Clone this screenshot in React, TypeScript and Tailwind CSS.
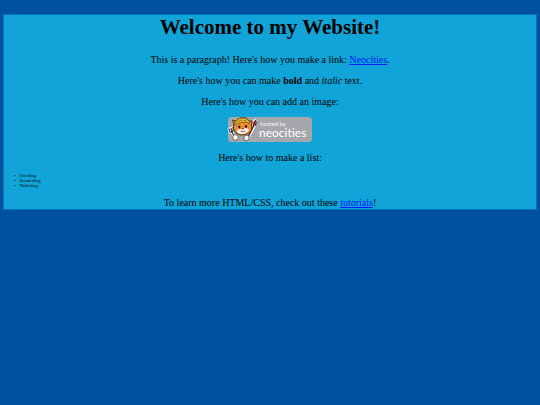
const things = ['First thing', 'Second thing', 'Third thing'];

function NeocitiesBadge() {
  return (
    <svg width="86" height="26" viewBox="0 0 86 26" role="img" aria-label="hosted by neocities">
      <rect x="1" y="0" width="84" height="25" rx="3.5" fill="#a5a7aa" />
      {/* fork */}
      <path d="M2 12Q2.5 16 5 15Q7 14 6 10.5M4 11.5 5 15 8 21" fill="none" stroke="#fff" strokeWidth="2.8" strokeLinecap="round" />
      <path d="M2 12Q2.5 16 5 15Q7 14 6 10.5M4 11.5 5 15 8 21" fill="none" stroke="#34495c" strokeWidth="1.3" strokeLinecap="round" />
      {/* brush */}
      <path d="M28 4 27 9M27 9 21 20" stroke="#fff" strokeWidth="3.4" strokeLinecap="round" />
      <path d="M27 8 21 20" stroke="#3b2a2a" strokeWidth="1.5" />
      <path d="M26.3 8Q25.8 5 28.7 3Q30.2 6 28.5 8.5Z" fill="#a82732" stroke="#34212a" strokeWidth=".6" />
      {/* cat */}
      <path d="M7 7 5.5 3 9 4.2Q13-1 20 1.5L22 4 25 4 24.5 8Q25.5 14 21.5 16.5Q14 20 8.5 15.5Q5 11.5 7 7Z" fill="#ed8b31" stroke="#5b3518" strokeWidth="1" />
      <path d="M7 8Q9 1 15.5 1Q21.5 1 23 6.5Q19 4.5 14.5 5.5Q10 6 7 8Z" fill="#e5bc3c" stroke="#805b13" strokeWidth=".9" />
      <path d="M10 4.5Q15 2 20 4" fill="none" stroke="#aa7b19" strokeWidth=".9" />
      <path d="M9.5 14Q12 11 15.5 12.5Q19 10 22 12.5Q20 16.5 15.5 17Q11 17 9.5 14Z" fill="#fff" />
      <ellipse cx="12.3" cy="10" rx="1.1" ry="1.4" fill="#24191a" />
      <ellipse cx="19" cy="9.5" rx="1.1" ry="1.4" fill="#24191a" />
      <path d="m14.8 11.5 2.4-.2-1.1 1.4Z" fill="#5a201c" />
      <path d="M13.5 14.2Q16 15.7 18.5 13.8" fill="none" stroke="#5a201c" strokeWidth=".8" />
      <circle cx="8.5" cy="20.5" r="2.8" fill="#fff" stroke="#4c4240" strokeWidth=".8" />
      <circle cx="19.5" cy="21" r="2.7" fill="#fff" stroke="#4c4240" strokeWidth=".8" />
      <text x="33" y="9" fontSize="6" fill="#f3f5f5" fontFamily="Lato, sans-serif">hosted by</text>
      <text x="32" y="20" fontSize="12" fill="#fff" fontFamily="Lato, sans-serif">neocities</text>
    </svg>
  );
}

export default function App() {
  return (
    <div className="min-h-screen bg-[#00529f] px-[3px] pt-3.5 font-['Liberation_Serif',serif] text-black">
      <main className="flex flex-col border border-[#0873b4] bg-[#10a4d8] text-center text-[10px] leading-3">
        <h1 className="text-[21px] leading-6 font-bold">Welcome to my Website!</h1>
        <div className="mt-[15px] flex flex-col gap-[9px]">
          <p>
            This is a paragraph! Here's how you make a link:{' '}
            <a href="https://neocities.org" className="text-[#0018f5] underline">Neocities</a>.
          </p>
          <p>
            Here's how you can make <strong>bold</strong> and <em>italic</em> text.
          </p>
          <p>Here's how you can add an image:</p>
          <div className="flex justify-center">
            <NeocitiesBadge />
          </div>
          <p>Here's how to make a list:</p>
          <ul className="pl-2.5 text-left text-[4px] leading-[5px]">
            {things.map((thing) => (
              <li key={thing} className="before:mr-1 before:content-['•']">{thing}</li>
            ))}
          </ul>
          <p>
            To learn more HTML/CSS, check out these{' '}
            <a href="https://neocities.org/tutorials" className="text-[#0018f5] underline">tutorials</a>!
          </p>
        </div>
      </main>
    </div>
  );
}
